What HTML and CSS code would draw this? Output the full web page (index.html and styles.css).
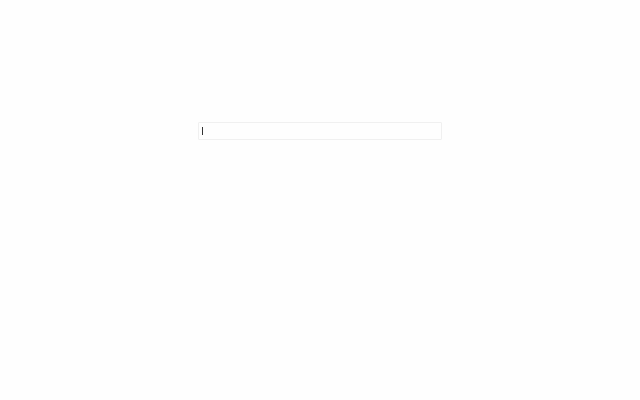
FILE: index.html
```html
<!DOCTYPE html>
<html lang="en">
<head>
    <meta charset="UTF-8">
    <meta name="viewport" content="width=device-width, initial-scale=1.0">
    <title>Search</title>
    <link rel="stylesheet" href="styles.css">
</head>
<body>
    <main class="container">
        <form class="search">
            <input class="search-input" type="text" aria-label="Search" autocomplete="off" autofocus>
            <span class="search-caret"></span>
        </form>
    </main>
</body>
</html>
```

FILE: styles.css
```css
* {
    box-sizing: border-box;
}

body {
    font-family: "Liberation Sans", Arial, sans-serif;
    background-color: #fefefe;
    margin: 0;
}

.container {
    padding: 122px 16px 16px;
}

.search {
    position: relative;
    max-width: 244px;
    margin: 0 auto;
}

.search-input {
    display: block;
    width: 100%;
    height: 18px;
    padding: 0 4px;
    background-color: #fefefe;
    border: 1px solid #f0f0f0;
    border-radius: 1px;
    outline: none;
    color: #222;
    caret-color: transparent;
    font-family: inherit;
    font-size: 8px;
}

/* thin text cursor, stands in for the native one */
.search-caret {
    position: absolute;
    top: 5px;
    left: 4px;
    width: 1px;
    height: 8px;
    background-color: #333;
    pointer-events: none;
}
```
